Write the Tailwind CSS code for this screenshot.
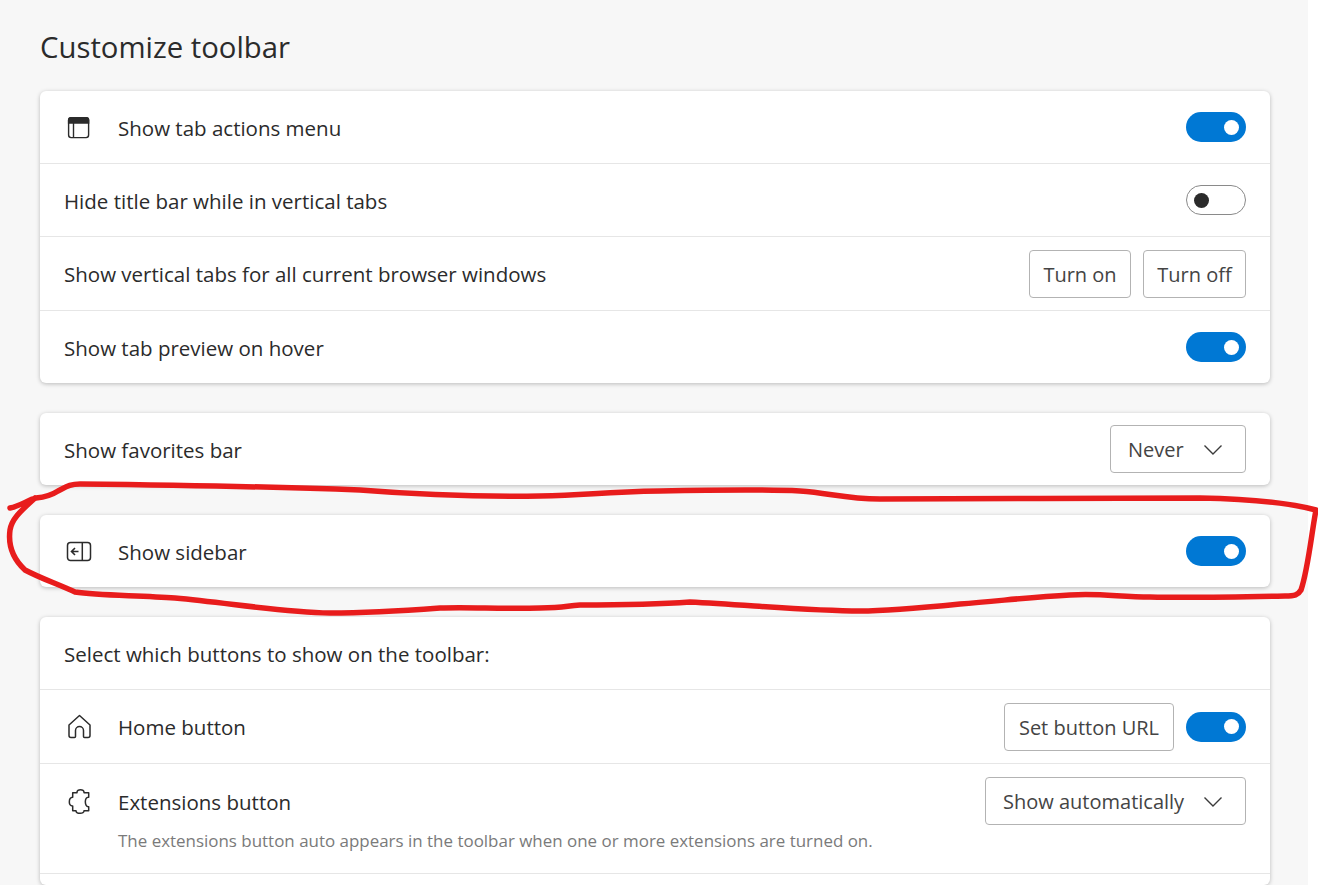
<!DOCTYPE html>
<html lang="en">

<head>
  <meta charset="UTF-8" />
  <title>Customize toolbar</title>
  <script src="https://cdn.jsdelivr.net/npm/@tailwindcss/browser@4"></script>
</head>

<body class="relative h-[885px] overflow-hidden bg-white font-['Open_Sans',sans-serif] text-[#2b2b2b]">
  <div class="h-full w-[1308px] bg-[#f7f7f7] pl-10 pr-[38px]">
    <h1 class="h-[91px] pt-[27px] text-[29.3px] leading-[40px] font-medium">Customize toolbar</h1>

    <div class="rounded-md bg-white shadow-[0_1px_4px_rgba(0,0,0,0.25)]">
      <div class="flex h-[72px] items-center justify-between px-6">
        <div class="flex items-center">
          <svg class="mr-6 h-[30px] w-[30px]" viewBox="0 0 30 30" fill="none" stroke="#2b2b2b" stroke-width="1.4">
            <rect x="4.600" y="5.600" width="20" height="20" rx="2.500" />
            <path d="M4.600 8a2.500 2.500 0 0 1 2.500-2.400h15a2.500 2.500 0 0 1 2.500 2.400v3H4.600z" fill="#2b2b2b" />
            <path d="M9.500 11v14.600" />
          </svg>
          <span class="pt-[2px] text-[20.5px] font-medium">Show tab actions menu</span>
        </div>
        <div class="flex h-[30px] w-[60px] items-center justify-end rounded-full bg-[#0078d4] pr-[7px]"><div class="h-[15px] w-[15px] rounded-full bg-white"></div></div>
      </div>
      <div class="flex h-[73px] items-center justify-between border-t border-[#e6e6e6] px-6">
        <span class="pt-[2px] text-[20.5px] font-medium">Hide title bar while in vertical tabs</span>
        <div class="flex h-[30px] w-[60px] items-center rounded-full border border-[#8a8a8a] pl-[7px]"><div class="h-[15px] w-[15px] rounded-full bg-[#2b2b2b]"></div></div>
      </div>
      <div class="flex h-[74px] items-center justify-between border-t border-[#e6e6e6] px-6">
        <span class="pt-[2px] text-[20.5px] font-medium">Show vertical tabs for all current browser windows</span>
        <div class="flex gap-3">
          <button class="h-[48px] w-[102px] rounded-sm border border-[#b3b3b3] pt-[2px] text-[20px] text-[#444]">Turn on</button>
          <button class="h-[48px] w-[103px] rounded-sm border border-[#b3b3b3] pt-[2px] text-[20px] text-[#444]">Turn off</button>
        </div>
      </div>
      <div class="flex h-[73px] items-center justify-between border-t border-[#e6e6e6] px-6">
        <span class="pt-[2px] text-[20.5px] font-medium">Show tab preview on hover</span>
        <div class="flex h-[30px] w-[60px] items-center justify-end rounded-full bg-[#0078d4] pr-[7px]"><div class="h-[15px] w-[15px] rounded-full bg-white"></div></div>
      </div>
    </div>

    <div class="mt-[30px] flex h-[72px] items-center justify-between rounded-md bg-white px-6 shadow-[0_1px_4px_rgba(0,0,0,0.25)]">
      <span class="pt-[2px] text-[20.5px] font-medium">Show favorites bar</span>
      <button class="flex h-[48px] w-[136px] items-center justify-between rounded-sm border border-[#b3b3b3] pt-[2px] pr-[23px] pl-[17px] text-[20px] text-[#444]">
        Never
        <svg class="h-[10px] w-[18px]" viewBox="0 0 18 10" fill="none" stroke="#3b3b3b" stroke-width="1.4"><path d="M0.500 0.500 9 9 17.500 0.500" /></svg>
      </button>
    </div>

    <div class="mt-[30px] flex h-[72px] items-center justify-between rounded-md bg-white px-6 shadow-[0_1px_4px_rgba(0,0,0,0.25)]">
      <div class="flex items-center">
        <svg class="mr-6 h-[30px] w-[30px]" viewBox="0 0 30 30" fill="none" stroke="#2b2b2b" stroke-width="1.5">
          <rect x="3.500" y="6.500" width="23" height="18" rx="3" />
          <path d="M18.300 6.500v18" />
          <path d="M14.500 15.500H7.500M11 12 7.500 15.500 11 19" stroke-width="1.6" />
        </svg>
        <span class="pt-[2px] text-[20.5px] font-medium">Show sidebar</span>
      </div>
      <div class="flex h-[30px] w-[60px] items-center justify-end rounded-full bg-[#0078d4] pr-[7px]"><div class="h-[15px] w-[15px] rounded-full bg-white"></div></div>
    </div>

    <div class="mt-[30px] rounded-md bg-white shadow-[0_1px_4px_rgba(0,0,0,0.25)]">
      <div class="flex h-[72px] items-center px-6">
        <span class="pt-[2px] text-[20.5px] font-medium">Select which buttons to show on the toolbar:</span>
      </div>
      <div class="flex h-[74px] items-center justify-between border-t border-[#e6e6e6] px-6">
        <div class="flex items-center">
          <svg class="mr-6 h-[30px] w-[30px]" viewBox="0 0 30 30" fill="none" stroke="#2b2b2b" stroke-width="1.5" stroke-linejoin="round">
            <path d="M5 13 15.500 3.500 26 13v10.500a2 2 0 0 1-2 2h-3.500a1 1 0 0 1-1-1v-6a4 4 0 0 0-8 0v6a1 1 0 0 1-1 1H7a2 2 0 0 1-2-2z" />
          </svg>
          <span class="pt-[2px] text-[20.5px] font-medium">Home button</span>
        </div>
        <div class="flex items-center gap-3">
          <button class="h-[48px] w-[170px] rounded-sm border border-[#b3b3b3] pt-[2px] text-[20px] text-[#444]">Set button URL</button>
          <div class="flex h-[30px] w-[60px] items-center justify-end rounded-full bg-[#0078d4] pr-[7px]"><div class="h-[15px] w-[15px] rounded-full bg-white"></div></div>
        </div>
      </div>
      <div class="flex h-[110px] items-start justify-between border-t border-[#e6e6e6] px-6 pt-[13px]">
        <div class="flex items-start">
          <svg class="mt-[9px] mr-6 h-[30px] w-[30px]" viewBox="0 0 30 30" fill="none" stroke="#2b2b2b" stroke-width="1.5" stroke-linejoin="round">
            <path d="M8.700 6.700H13c-.5-4 7.500-4 7 0h4.700v4.600c-4.500-1.200-4.500 10.200 0 9.400v4H20c.5 3.500-8 3.500-8 0H8.700v-4.700c-4.500.5-4.500-8.500 0-8.700z" />
          </svg>
          <div>
            <div class="mt-[11px] text-[20.5px] leading-[28px] font-medium">Extensions button</div>
            <div class="mt-[13px] text-[16.950px] leading-[24px] text-[#7a7a7a]">The extensions button auto appears in the toolbar when one or more extensions are turned on.</div>
          </div>
        </div>
        <button class="flex h-[48px] w-[261px] items-center justify-between rounded-sm border border-[#b3b3b3] pt-[2px] pr-[23px] pl-[17px] text-[20px] text-[#444]">
          Show automatically
          <svg class="h-[10px] w-[18px]" viewBox="0 0 18 10" fill="none" stroke="#3b3b3b" stroke-width="1.4"><path d="M0.500 0.500 9 9 17.500 0.500" /></svg>
        </button>
      </div>
      <div class="h-[12px] border-t border-[#e6e6e6]"></div>
    </div>
  </div>

  <!-- red marker scribble sits over the page -->
  <svg class="pointer-events-none absolute top-0 left-0" width="1318" height="885" viewBox="0 0 1318 885" fill="none" stroke="#e81c1c" stroke-width="5.500" stroke-linecap="round" stroke-linejoin="round">
    <path d="M10 508C20 506 28 500 36 498C46 497 52 495 58 491C66 487 70 484 80 484C170 485 280 487 360 490C410 494 470 497 540 496C590 495 600 492 660 491C710 490 760 489 800 491C830 493 845 499 880 499C980 499 1100 498 1200 498C1250 499 1290 503 1316 510C1312 530 1308 570 1301 590C1298 595 1295 596 1285 596C1240 597 1190 598 1150 597C1120 597 1100 593 1070 595C1030 597 1000 601 960 604C920 608 890 611 860 611C810 611 750 605 690 602C650 605 620 605 580 605C565 606 565 608 540 608C500 609 470 607 440 608C400 611 370 613 330 613C280 612 230 603 175 598C140 595 100 596 75 592C55 583 40 578 25 570C12 558 8 545 10 530C12 518 22 510 35 498" />
  </svg>
</body>

</html>
